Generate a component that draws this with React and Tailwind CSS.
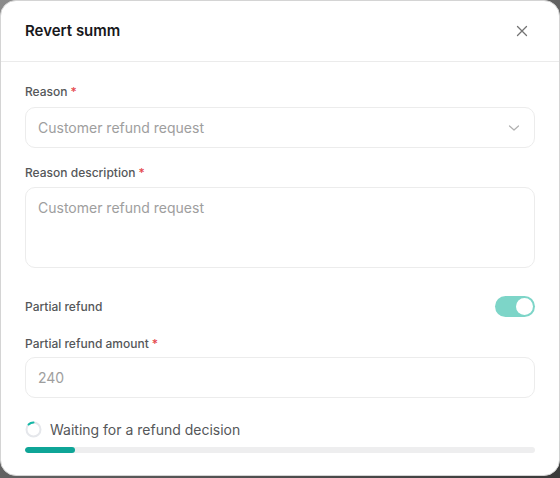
import React from 'react';

function Label({ children }) {
	return (
		<div className="text-[12px] font-medium leading-[16px] text-[#555759]">
			{children}
			<span className="ml-[3px] text-[#e5484d]">*</span>
		</div>
	);
}

export default function App() {
	return (
		<div
			className="h-[478px] w-[560px] bg-gradient-to-br from-[#8c8c8c] to-[#3a3a3a]"
			style={{ fontFamily: 'Inter, "Noto Sans", sans-serif' }}
		>
			<div className="flex h-[476px] flex-col rounded-[16px] border border-[#d4d4d4] bg-white">
				{/* header */}
				<div className="flex h-[61px] items-center justify-between border-b border-[#ebebeb] pl-[24px] pr-[30px]">
					<h2 className="text-[15px] font-semibold text-[#18181b]">Revert summ</h2>
					<svg width="14" height="14" viewBox="0 0 14 14" fill="none" stroke="#737373" strokeWidth="1.3" strokeLinecap="round">
						<path d="M2.5 2.5l9 9M11.5 2.5l-9 9" />
					</svg>
				</div>

				{/* body */}
				<div className="flex flex-col px-[24px] pt-[22px]">
					<Label>Reason</Label>
					<div className="mt-[7px] flex h-[41px] items-center justify-between rounded-[10px] border border-[#ececec] pl-[12px] pr-[14px]">
						<span className="text-[14px] text-[#9e9e9e]">Customer refund request</span>
						<svg width="12" height="8" viewBox="0 0 12 8" fill="none" stroke="#b0b0b0" strokeWidth="1.2" strokeLinecap="round" strokeLinejoin="round">
							<path d="M1.5 2l4.5 4 4.5-4" />
						</svg>
					</div>

					<div className="mt-[17px]">
						<Label>Reason description</Label>
					</div>
					<div className="mt-[6px] h-[81px] rounded-[10px] border border-[#ececec] px-[12px] pt-[9px] leading-[20px]">
						<span className="text-[14px] text-[#9e9e9e]">Customer refund request</span>
					</div>

					<div className="mt-[28px] flex h-[21px] items-center justify-between">
						<span className="text-[12px] font-medium text-[#555759]">Partial refund</span>
						<div className="flex h-[21px] w-[40px] items-center justify-end rounded-full bg-[#7dd5c8] pr-[2px]">
							<div className="h-[17px] w-[17px] rounded-full bg-white" />
						</div>
					</div>

					<div className="mt-[19px]">
						<Label>Partial refund amount</Label>
					</div>
					<div className="mt-[5px] flex h-[41px] items-center rounded-[10px] border border-[#ececec] px-[12px]">
						<span className="text-[14px] text-[#9e9e9e]">240</span>
					</div>

					<div className="mt-[23px] flex h-[17px] items-center gap-[8px]">
						<svg width="17" height="17" viewBox="0 0 17 17" fill="none">
							<circle cx="8.5" cy="8.5" r="7" stroke="#e5e7eb" strokeWidth="2" />
							<path d="M3.6 3.5A7 7 0 0 1 8.5 1.5" stroke="#14b8a6" strokeWidth="2" strokeLinecap="round" />
						</svg>
						<span className="text-[14px] text-[#555759]">Waiting for a refund decision</span>
					</div>
					<div className="mt-[9px] h-[6px] w-full overflow-hidden rounded-full bg-[#eeeeef]">
						<div className="h-full w-[50px] rounded-full bg-[#0ea597]" />
					</div>
				</div>
			</div>
		</div>
	);
}
